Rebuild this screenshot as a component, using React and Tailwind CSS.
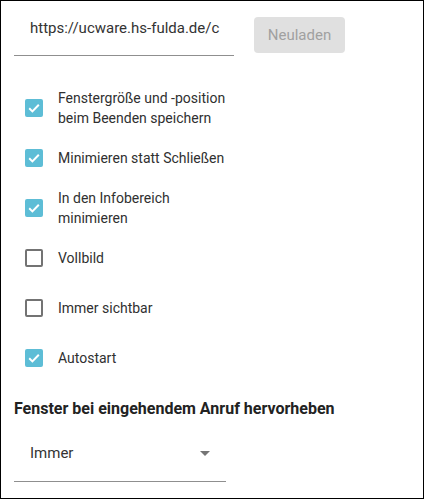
import React, { useState } from "react";

const options = [
  { label: "Fenstergröße und -position beim Beenden speichern", checked: true },
  { label: "Minimieren statt Schließen", checked: true },
  { label: "In den Infobereich minimieren", checked: true },
  { label: "Vollbild", checked: false },
  { label: "Immer sichtbar", checked: false },
  { label: "Autostart", checked: true },
];

const Checkbox = ({ checked, onClick }) => {
  if (checked) {
    return (
      <button onClick={onClick} className="w-[18px] h-[18px] shrink-0 rounded-[2px] bg-[#5dbdd6] flex items-center justify-center">
        <svg width="18" height="18" viewBox="0 0 18 18">
          <path d="M4.2 9.3l3.2 3.1 6.4-6.6" fill="none" stroke="#fff" strokeWidth="2" />
        </svg>
      </button>
    );
  }
  return <button onClick={onClick} className="w-[18px] h-[18px] shrink-0 rounded-[2px] border-2 border-[#737373] bg-white" />;
};

export default function App() {
  const [items, setItems] = useState(options);
  const [url, setUrl] = useState("https://ucware.hs-fulda.de/c");

  const toggle = (index) => {
    setItems(items.map((item, i) => (i === index ? { ...item, checked: !item.checked } : item)));
  };

  return (
    <div className="w-[424px] h-[499px] border border-black bg-white text-[#303030] font-['Roboto',sans-serif] pl-[13px] pt-[12px]">
      <div className="flex items-start">
        <div className="w-[220px] pb-[12px] border-b border-[#8f8f8f]">
          <input
            value={url}
            onChange={(e) => setUrl(e.target.value)}
            className="h-[30px] w-full pl-4 pr-3 text-[15px] text-[#333] bg-transparent outline-none"
          />
        </div>
        <button disabled className="ml-[20px] mt-[4px] w-[91px] h-[36px] rounded-[4px] bg-[#e0e0e0] text-[#a0a0a0] text-[15px]">
          Neuladen
        </button>
      </div>

      <div className="mt-[27px]">
        {items.map((item, index) => (
          <div key={index} className="h-[50px] flex items-center pl-[11px]">
            <Checkbox checked={item.checked} onClick={() => toggle(index)} />
            <p className="ml-[15px] w-[180px] text-[14px] leading-[20px]">{item.label}</p>
          </div>
        ))}
      </div>

      <h2 className="mt-[14px] text-[16px] leading-[24px] font-bold text-[#222]">
        Fenster bei eingehendem Anruf hervorheben
      </h2>

      <div className="w-[212px] pt-[22px] pb-[18px] pl-4 pr-4 border-b border-[#8f8f8f] flex items-center justify-between">
        <span className="text-[15px] leading-[20px] text-[#333]">Immer</span>
        <svg width="10" height="5" viewBox="0 0 10 5">
          <path d="M0 0h10L5 5z" fill="#757575" />
        </svg>
      </div>
    </div>
  );
}
